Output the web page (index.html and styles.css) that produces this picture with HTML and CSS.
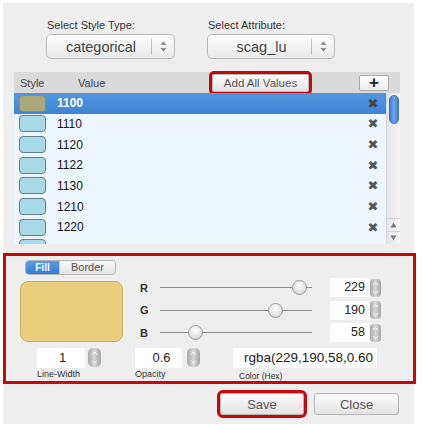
FILE: index.html
```html
<!DOCTYPE html>
<html>
<head>
<meta charset="utf-8">
<link rel="stylesheet" href="styles.css">
</head>
<body>
<div class="panel">
  <div class="selects">
    <div class="field f1">
      <div class="flabel">Select Style Type:</div>
      <div class="select"><span class="sel-text">categorical</span><span class="sel-div"></span><span class="sel-arrows"><svg width="7" height="11" viewBox="0 0 7 11"><path d="M3.5 0.5 L6.5 4 L0.5 4 Z" fill="#8a8a8a"/><path d="M0.5 7 L6.5 7 L3.5 10.5 Z" fill="#8a8a8a"/></svg></span></div>
    </div>
    <div class="field f2">
      <div class="flabel">Select Attribute:</div>
      <div class="select"><span class="sel-text">scag_lu</span><span class="sel-div"></span><span class="sel-arrows"><svg width="7" height="11" viewBox="0 0 7 11"><path d="M3.5 0.5 L6.5 4 L0.5 4 Z" fill="#8a8a8a"/><path d="M0.5 7 L6.5 7 L3.5 10.5 Z" fill="#8a8a8a"/></svg></span></div>
    </div>
  </div>

  <div class="table">
    <div class="thead">
      <span class="th-style">Style</span>
      <span class="th-value">Value</span>
      <button class="add-all">Add All Values</button>
      <button class="plus">+</button>
    </div>
    <div class="tbody">
      <div class="rows">
        <div class="row selected"><span class="swatch sel-sw"></span><span class="val">1100</span><span class="del">✖</span></div>
        <div class="row"><span class="swatch"></span><span class="val">1110</span><span class="del">✖</span></div>
        <div class="row"><span class="swatch"></span><span class="val">1120</span><span class="del">✖</span></div>
        <div class="row"><span class="swatch"></span><span class="val">1122</span><span class="del">✖</span></div>
        <div class="row"><span class="swatch"></span><span class="val">1130</span><span class="del">✖</span></div>
        <div class="row"><span class="swatch"></span><span class="val">1210</span><span class="del">✖</span></div>
        <div class="row"><span class="swatch"></span><span class="val">1220</span><span class="del">✖</span></div>
        <div class="row"><span class="swatch"></span></div>
      </div>
      <div class="scrollbar">
        <div class="thumb"></div>
        <div class="sb-space"></div>
        <div class="sb-btn"><svg width="7" height="6" viewBox="0 0 7 6"><path d="M3.5 0.5 L6.5 5.5 L0.5 5.5 Z" fill="#7d7d7d"/></svg></div>
        <div class="sb-btn"><svg width="7" height="6" viewBox="0 0 7 6"><path d="M0.5 0.5 L6.5 0.5 L3.5 5.5 Z" fill="#7d7d7d"/></svg></div>
      </div>
    </div>
  </div>

  <div class="style-box">
    <div class="top">
      <div class="left">
        <div class="toggle"><span class="tg tg-on">Fill</span><span class="tg tg-off">Border</span></div>
        <div class="preview"></div>
      </div>
      <div class="channels">
        <div class="ch">
          <span class="ch-l">R</span>
          <span class="track"><span class="knob" style="left: 139px"></span></span>
          <span class="num">229</span><span class="spin"><svg width="11" height="18" viewBox="0 0 11 18"><path d="M3 6 L5.5 3.5 L8 6" stroke="#fff" stroke-width="1" fill="none"/><path d="M3 12 L5.5 14.5 L8 12" stroke="#fff" stroke-width="1" fill="none"/></svg></span>
        </div>
        <div class="ch">
          <span class="ch-l">G</span>
          <span class="track"><span class="knob" style="left: 115px"></span></span>
          <span class="num">190</span><span class="spin"><svg width="11" height="18" viewBox="0 0 11 18"><path d="M3 6 L5.5 3.5 L8 6" stroke="#fff" stroke-width="1" fill="none"/><path d="M3 12 L5.5 14.5 L8 12" stroke="#fff" stroke-width="1" fill="none"/></svg></span>
        </div>
        <div class="ch">
          <span class="ch-l">B</span>
          <span class="track"><span class="knob" style="left: 35px"></span></span>
          <span class="num">58</span><span class="spin"><svg width="11" height="18" viewBox="0 0 11 18"><path d="M3 6 L5.5 3.5 L8 6" stroke="#fff" stroke-width="1" fill="none"/><path d="M3 12 L5.5 14.5 L8 12" stroke="#fff" stroke-width="1" fill="none"/></svg></span>
        </div>
      </div>
    </div>
    <div class="bottom">
      <div class="grp g-lw">
        <div class="grp-row"><span class="inp inp-lw">1</span><span class="spin spin-b"><svg width="13" height="19" viewBox="0 0 13 19"><path d="M4 6.5 L6.5 4 L9 6.5" stroke="#fff" stroke-width="1" fill="none"/><path d="M4 12.5 L6.5 15 L9 12.5" stroke="#fff" stroke-width="1" fill="none"/></svg></span></div>
        <div class="grp-l">Line-Width</div>
      </div>
      <div class="grp g-op">
        <div class="grp-row"><span class="inp inp-op">0.6</span><span class="spin spin-b"><svg width="13" height="19" viewBox="0 0 13 19"><path d="M4 6.5 L6.5 4 L9 6.5" stroke="#fff" stroke-width="1" fill="none"/><path d="M4 12.5 L6.5 15 L9 12.5" stroke="#fff" stroke-width="1" fill="none"/></svg></span></div>
        <div class="grp-l">Opacity</div>
      </div>
      <div class="grp g-hex">
        <div class="grp-row"><span class="inp inp-hex">rgba(229,190,58,0.60</span></div>
        <div class="grp-l hex-l">Color (Hex)</div>
      </div>
    </div>
  </div>

  <div class="actions">
    <button class="btn save">Save</button>
    <button class="btn close">Close</button>
  </div>
</div>
</body>
</html>
```

FILE: styles.css
```css
* { box-sizing: border-box; }
html, body { margin: 0; padding: 0; background: #ffffff; }
body { font-family: "Liberation Sans", Arial, sans-serif; color: #222; }

.panel {
  margin: 3px 0 0 3px;
  width: 411px;
  height: 421px;
  background: #eeeeee;
  display: flex;
  flex-direction: column;
}

/* selects */
.selects { display: flex; padding: 16px 0 0 43px; gap: 32px; }
.field { display: flex; flex-direction: column; }
.f1 { width: 129px; }
.f2 { width: 128px; }
.flabel { font-size: 11px; line-height: 13px; color: #333; padding-left: 1px; height: 15px; }
.select {
  height: 25px;
  border: 1px solid #b9b9b9;
  border-radius: 5px;
  background: linear-gradient(#fdfdfd, #e9e9e9);
  display: flex;
  align-items: center;
}
.sel-text { flex: 1; text-align: center; font-size: 14.5px; color: #444; padding-left: 4px; }
.sel-div { width: 1px; height: 15px; background: #bcbcbc; }
.sel-arrows { width: 22px; display: flex; justify-content: center; align-items: center; }
.sel-arrows svg { display: block; }

/* table */
.table { margin: 13px 0 0 11px; width: 386px; display: flex; flex-direction: column; }
.thead {
  height: 21px;
  background: #dadada;
  display: flex;
  align-items: center;
  font-size: 11px;
  color: #444;
}
.th-style { margin-left: 6px; width: 58px; }
.th-value { width: 134px; }
.add-all {
  width: 97px;
  height: 18px;
  margin-top: 1px;
  padding: 0;
  font-family: inherit;
  font-size: 11.5px;
  color: #555;
  background: linear-gradient(#fbfbfb, #e6e6e6);
  border: 1px solid #b8b8b8;
  border-radius: 2px;
  outline: 3px solid #c20a0a;
  outline-offset: 0px;
}
.plus {
  margin-left: 50px;
  width: 30px;
  height: 16px;
  padding: 0;
  font-family: inherit;
  font-size: 17px;
  font-weight: bold;
  line-height: 14px;
  color: #222;
  background: linear-gradient(#ffffff, #ececec);
  border: 1px solid #aaaaaa;
  border-radius: 2px;
}

.tbody { height: 151px; display: flex; background: #eef6fd; }
.rows { width: 372px; height: 151px; overflow: hidden; }
.row {
  height: 20.67px;
  display: flex;
  align-items: center;
  font-size: 12px;
  color: #111;
}
.row.selected {
  background: linear-gradient(#5396e0, #3f84d4);
  color: #ffffff;
  font-weight: bold;
}
.swatch {
  width: 27px;
  height: 17px;
  margin-left: 5px;
  border: 1.5px solid #5f7f8c;
  border-radius: 4px;
  background: #a9d8e8;
}
.sel-sw { background: #aba877; border-color: #8f8e70; }
.val { margin-left: 11px; }
.del {
  margin-left: auto;
  margin-right: 6px;
  width: 14px;
  text-align: center;
  font-size: 13px;
  color: #555;
  font-family: "DejaVu Sans", sans-serif;
}
.row.selected .del { color: #444; font-weight: normal; }

.scrollbar {
  width: 14px;
  display: flex;
  flex-direction: column;
  background: linear-gradient(90deg, #e6e6e6, #f6f6f6);
  border-left: 1px solid #d8d8d8;
}
.thumb {
  margin: 2px 1px 0 2px;
  height: 29px;
  border-radius: 6px;
  background: linear-gradient(90deg, #3c7fd2, #6ea7ea 50%, #3b7ccd);
  border: 1px solid #3a71b8;
}
.sb-space { flex: 1; }
.sb-btn {
  height: 13px;
  display: flex;
  align-items: center;
  justify-content: center;
  border-top: 1px solid #d2d2d2;
}
.sb-btn svg { display: block; }

/* style box */
.style-box {
  margin-top: 9px;
  width: 413px;
  height: 131px;
  border: 3px solid #c20a0a;
  display: flex;
  flex-direction: column;
}
.top { display: flex; }
.left { margin-left: 14px; padding-top: 4px; display: flex; flex-direction: column; }
.toggle {
  margin-left: 5px;
  display: flex;
  width: 91px;
  height: 15px;
  border: 1px solid #b5b5b5;
  border-radius: 4px;
  overflow: hidden;
  font-size: 11px;
  line-height: 13px;
}
.tg { display: block; text-align: center; }
.tg-on {
  width: 33px;
  background: linear-gradient(#5a9ce3, #357dd0);
  color: #fff;
  font-weight: bold;
  font-size: 10px;
}
.tg-off { flex: 1; background: linear-gradient(#fafafa, #e3e3e3); color: #555; border-left: 1px solid #c4c4c4; }
.preview {
  margin-top: 6px;
  width: 103px;
  height: 61px;
  border: 1.5px solid #c9ad5c;
  border-radius: 8px;
  background: #e9ce7d;
}

.channels { margin-left: 17px; padding-top: 20.5px; display: flex; flex-direction: column; }
.ch { height: 22.5px; display: flex; align-items: center; }
.ch-l { width: 20px; font-size: 11px; font-weight: bold; color: #333; }
.track {
  position: relative;
  width: 152px;
  height: 1px;
  background: #8e8e8e;
}
.knob {
  position: absolute;
  top: -7px;
  width: 15px;
  height: 15px;
  margin-left: -7px;
  border-radius: 50%;
  border: 1px solid #9a9a9a;
  background: radial-gradient(circle at 50% 35%, #ffffff, #e2e2e2 60%, #c8c8c8);
}
.num {
  margin-left: 18px;
  width: 39px;
  height: 19px;
  background: #fff;
  font-size: 12.5px;
  line-height: 19px;
  text-align: right;
  padding-right: 4px;
  color: #222;
}
.spin {
  margin-left: 1px;
  width: 11px;
  height: 18px;
  border-radius: 4px;
  background: linear-gradient(90deg, #a9a9a9, #d6d6d6 50%, #a5a5a5);
  display: flex;
}
.spin svg { display: block; }

.bottom { display: flex; margin-top: 3px; }
.grp { display: flex; flex-direction: column; }
.grp-row { display: flex; align-items: center; height: 21px; }
.g-lw { margin-left: 31px; }
.g-op { margin-left: 34px; }
.g-hex { margin-left: 33px; }
.inp {
  height: 20px;
  background: #fff;
  font-size: 13px;
  line-height: 20px;
  color: #222;
}
.inp-lw { width: 48px; text-align: center; padding-left: 3px; }
.inp-op { width: 47px; text-align: center; padding-left: 6px; }
.spin-b { width: 13px; height: 19px; margin-left: 3px; border-radius: 5px; }
.inp-op + .spin-b { margin-left: 5px; }
.inp-hex {
  width: 144px;
  font-size: 13.5px;
  text-align: right;
  padding-right: 4px;
  white-space: nowrap;
  overflow: hidden;
}
.grp-l { font-size: 9px; color: #333; margin-top: 1px; line-height: 11px; }
.hex-l { padding-left: 6px; margin-top: 3px; font-size: 8.5px; }

/* actions */
.actions { display: flex; justify-content: flex-end; gap: 10px; padding-right: 15px; margin-top: 9px; }
.btn {
  height: 22px;
  padding: 0;
  font-family: inherit;
  font-size: 13px;
  color: #555;
  background: linear-gradient(#fbfbfb, #e3e3e3);
  border: 1px solid #b4b4b4;
  border-radius: 3px;
}
.save { width: 84px; outline: 3px solid #c20a0a; outline-offset: 0px; }
.close { width: 85px; }
```
